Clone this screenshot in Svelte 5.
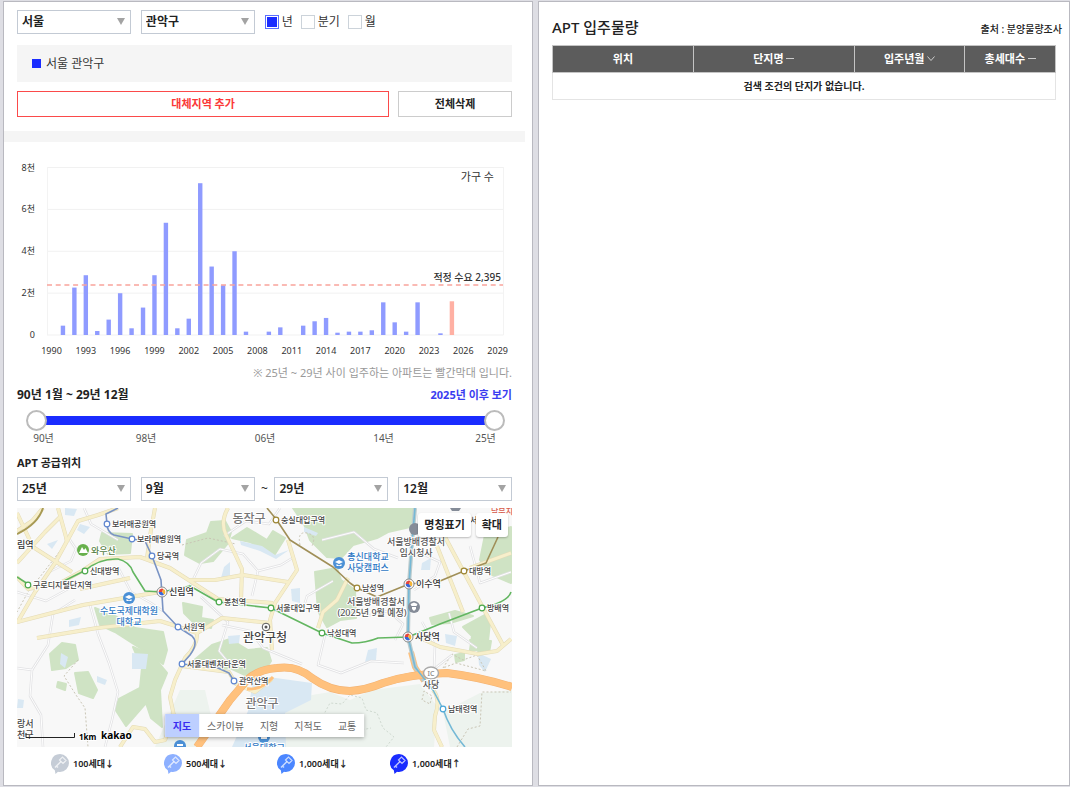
<script>
  let city = "서울";
  let district = "관악구";
  let unit = "년";
  const units = ["년", "분기", "월"];

  let fromYear = "25년";
  let fromMonth = "9월";
  let toYear = "29년";
  let toMonth = "12월";
  const years = ["25년", "26년", "27년", "28년", "29년"];
  const months = Array.from({ length: 12 }, (_, i) => `${i + 1}월`);

  let rangeStart = 0;
  let rangeEnd = 100;

  // households per year, starting in 1990
  const supply = [
    0, 446, 2265, 2855, 190, 735, 1995, 320, 1310, 2855, 5360, 320, 780, 7250,
    3270, 2375, 4000, 160, 0, 160, 365, 0, 446, 655, 815, 110, 160, 160, 225,
    1560, 605, 160, 1560, 0, 80, 1610,
  ];
  const barX = (i) => 51.5 + i * 11.44;
  const barY = (v) => 335 - (v / 8000) * 167.5;
  const yLabels = [
    [8000, "8천"],
    [6000, "6천"],
    [4000, "4천"],
    [2000, "2천"],
    [0, "0"],
  ];
  const xLabels = Array.from({ length: 14 }, (_, i) => i * 3);

  const parks = [
    "M102 533L132 534L130 553L108 554L100 541Z",
    "M187 540L207 533L211 522L225 521L231 532L228 543L213 561L200 563L185 555Z",
    "M232 538L247 528L267 540L273 531L285 538L275 554L250 542Z",
    "M293 508L414 508L410 527L388 532L377 538L353 545L341 558L327 557L310 540L304 524Z",
    "M315 572L337 568L341 580L355 590L356 618L340 620L327 627L318 611Z",
    "M183 603L202 607L201 618L213 620L211 628L196 625L184 613Z",
    "M485 535L511 527L511 583L490 574L480 560Z",
    "M463 627L485 615L490 623L487 650L470 650L472 636Z",
    "M430 618L455 611L473 616L450 623L432 624Z",
    "M50 654L62 643L75 645L78 660L66 668L52 670Z",
    "M95 608L117 617L135 628L163 632L167 650L163 664L143 650L115 632L100 625Z",
    "M133 647L152 655L167 673L160 690L162 727L151 718L146 703L126 726L115 709L119 699L140 688L142 668Z",
    "M75 673L88 672L97 690L93 698L79 693Z",
    "M192 662L212 645L230 639L248 650L267 648L271 661L264 672L245 675L230 668L213 670Z",
    "M58 682L66 684L65 690L57 687Z",
    "M455 655L464 653L464 660L456 662Z",
    "M470 640L491 641L489 653L478 651Z",
  ];
  const waters = [
    "M254 675L312 683L311 700L285 713L286 747L232 747L248 711Z",
    "M65 508L77 509L74 516L65 515Z",
    "M80 524L90 527L84 534L77 530Z",
    "M47 544L58 540L52 549Z",
    "M132 653L148 654L146 669L132 669Z",
    "M61 653L68 657L65 668L60 664Z",
    "M224 567L230 562L230 575L221 578Z",
    "M291 589L300 588L300 603L292 601Z",
    "M228 636L240 635L239 643L229 644Z",
    "M422 563L431 558L430 570L421 570Z",
    "M18 699L24 700L23 708L17 708Z",
    "M368 650L377 648L376 660L365 662Z",
    "M69 620L81 617L79 625L69 627Z",
    "M478 653L491 659L485 672L479 665Z",
    "M304 527L318 533L316 536L304 532Z",
    "M445 634L457 636L455 646L446 643Z",
    "M97 676L107 680L105 685L97 682Z",
    "M240 541L262 546L275 555L289 550L276 559L260 551L241 545Z",
  ];
  const lanes = [
    "M17 668L32 670L48 645L53 614L75 600",
    "M84 508L91 524L118 540",
    "M90 605L98 634L109 663L118 692L112 720L105 747",
    "M32 670L30 696L41 715L43 747",
    "M17 592L46 601L68 589",
    "M118 567L131 592L151 603L163 611",
    "M190 586L201 563L220 549L243 554L258 571L252 596",
    "M258 571L281 565L294 557",
    "M201 597L228 622L219 651L229 663",
    "M222 625L250 631L263 648L302 664",
    "M280 612L304 606L307 596L333 581",
    "M322 540L354 532L374 549L398 558",
    "M414 550L440 562L435 576L414 590",
    "M422 622L435 645L434 669L452 655",
    "M325 635L318 665L341 673L371 661L404 663",
    "M362 617L388 611L403 624L395 640",
    "M470 546L480 583L511 572",
    "M449 613L454 632L477 648",
    "M280 508L269 524L246 521L224 536",
    "M70 540L76 549L71 561L47 573",
  ];
  const roads = [
    "M43 508L32 521L17 531",
    "M58 508L66 537L67 542",
    "M118 508L98 515L78 521L55 563L35 592L17 623",
    "M17 513L33 547L72 572",
    "M17 563L45 532L60 517",
    "M17 622L83 605L130 597L160 592",
    "M37 638L97 628L160 621L176 626",
    "M155 508L151 530L147 558",
    "M17 577L28 589L60 583L82 571L100 559L140 557L170 568L218 599L273 603",
    "M80 589L130 578",
    "M228 508Q220 522 226 535L236 556L242 569L241 601",
    "M190 580L215 580L243 575L288 582",
    "M288 540L297 570L275 603L270 620L272 650",
    "M176 626L197 633L222 618L270 623",
    "M348 578L337 600L323 612L318 628",
    "M437 546L463 612",
    "M445 537L503 645",
    "M470 568L511 553",
    "M197 633Q198 645 185 658L175 680L170 697L174 716L165 740L155 742L145 729L133 727L120 747",
    "M182 666L229 672L236 684L255 692L272 679",
    "M418 637L440 647L478 654L497 651L511 639",
    "M433 690Q441 699 435 716L434 730L442 747",
  ];
  const highway =
    "M197 747L230 700L247 680Q259 669 277 668Q297 665 312 678Q330 691 350 691Q366 690 383 683Q410 674 447 673Q480 677 512 687";
  const rail2 =
    "M17 577L28 584M60 583L84 571Q100 558 118 559Q130 562 133 572L145 591L162 592L190 586L218 602L271 608L322 633L352 643Q366 643 378 638L408 637L440 624L482 608Q508 602 511 592";
  const railSillim =
    "M118 508L106 514L107 524Q107 532 114 535L132 539L145 541L152 556L161 580L163 611L178 627L192 636Q199 643 190 655L182 664L218 668L229 673L234 681";
  const rail7 =
    "M267 508L276 519L290 540L333 567L350 583L357 588L377 597L409 584L440 581L464 571L486 563L498 537";
  const rail4 =
    "M415 508L412 543L409 584L408 637L415 667L433 690L443 709Q450 730 465 747";

  const stations = [
    [107, 524, "보라매공원역", "#5f86d0"],
    [132, 539, "보라매병원역", "#5f86d0"],
    [152, 556, "당곡역", "#5f86d0"],
    [178, 627, "서원역", "#5f86d0"],
    [182, 664, "서울대벤처타운역", "#5f86d0"],
    [234, 681, "관악산역", "#5f86d0"],
    [85, 571, "신대방역", "#4ba84b"],
    [28, 585, "구로디지털단지역", "#4ba84b"],
    [219, 602, "봉천역", "#4ba84b"],
    [271, 608, "서울대입구역", "#4ba84b"],
    [322, 633, "낙성대역", "#4ba84b"],
    [482, 608, "방배역", "#4ba84b"],
    [276, 520, "숭실대입구역", "#9c8532"],
    [357, 588, "남성역", "#9c8532"],
    [464, 571, "대방역", "#9c8532"],
    [443, 709, "남태령역", "#48a6d8"],
  ];
  const transfers = [
    [162, 592, "신림역"],
    [409, 584, "이수역"],
    [408, 637, "사당역"],
  ];

  const mapTypes = ["지도", "스카이뷰", "지형", "지적도", "교통"];
  let mapType = "지도";

  const markers = [
    ["#c5ccd6", "100세대↓"],
    ["#8db0ff", "500세대↓"],
    ["#4b86ff", "1,000세대↓"],
    ["#1a2cff", "1,000세대↑"],
  ];
</script>

<div class="page">
  <section class="panel left">
    <div class="filters">
      <span class="select">
        <select bind:value={city} aria-label="시도">
          <option>서울</option>
          <option>경기</option>
        </select>
      </span>
      <span class="select">
        <select bind:value={district} aria-label="시군구">
          <option>관악구</option>
          <option>동작구</option>
        </select>
      </span>
      <div class="units">
        {#each units as u}
          <label><input type="radio" name="unit" value={u} bind:group={unit} />{u}</label>
        {/each}
      </div>
    </div>

    <div class="region"><i></i>서울 관악구</div>

    <div class="actions">
      <button class="add">대체지역 추가</button>
      <button class="clear">전체삭제</button>
    </div>

    <div class="band"></div>

    <svg class="chart" viewBox="17 142 495 222" role="img" aria-label="가구 수">
      {#each yLabels as [value, label]}
        <line x1="47" x2="503.5" y1={barY(value)} y2={barY(value)} stroke="#f1f1f1" />
        <text x="35" y={barY(value) + 3} text-anchor="end" class="tick">{label}</text>
      {/each}
      <path d="M47.5 167V335M503.5 167V335" stroke="#f3f3f3" />
      {#each supply as value, i}
        <rect
          x={barX(i) - 2.2}
          y={barY(value)}
          width="4.4"
          height={335 - barY(value)}
          fill={i >= 35 ? "#ffb0a3" : "#8f9bff"}
        />
      {/each}
      <path d="M47 285H503" stroke="#f9a49c" stroke-width="1.5" stroke-dasharray="5 3.7" />
      {#each xLabels as i}
        <text x={barX(i)} y="354" text-anchor="middle" class="tick">{1990 + i}</text>
      {/each}
      <text x="494" y="181" text-anchor="end" class="unit-name">가구 수</text>
      <text x="501" y="281" text-anchor="end" class="demand">적정 수요 2,395</text>
    </svg>
    <p class="note">※ 25년 ~ 29년 사이 입주하는 아파트는 빨간막대 입니다.</p>

    <div class="period">
      <strong>90년 1월 ~ 29년 12월</strong>
      <button>2025년 이후 보기</button>
    </div>
    <div class="slider">
      <div class="track"></div>
      <input type="range" bind:value={rangeStart} aria-label="시작 시점" />
      <input type="range" bind:value={rangeEnd} aria-label="종료 시점" />
    </div>
    <div class="slider-ticks">
      <span>90년</span><span>98년</span><span>06년</span><span>14년</span><span>25년</span>
    </div>

    <h2>APT 공급위치</h2>
    <div class="dates">
      <div class="pair">
        <span class="select">
          <select bind:value={fromYear} aria-label="시작 연도">
            {#each years as y}<option>{y}</option>{/each}
          </select>
        </span>
        <span class="select">
          <select bind:value={fromMonth} aria-label="시작 월">
            {#each months as m}<option>{m}</option>{/each}
          </select>
        </span>
      </div>
      <span>~</span>
      <div class="pair">
        <span class="select">
          <select bind:value={toYear} aria-label="종료 연도">
            {#each years as y}<option>{y}</option>{/each}
          </select>
        </span>
        <span class="select">
          <select bind:value={toMonth} aria-label="종료 월">
            {#each months as m}<option>{m}</option>{/each}
          </select>
        </span>
      </div>
    </div>

    <div class="map">
      <svg viewBox="17 508 495 239" preserveAspectRatio="xMidYMid slice">
        <rect x="17" y="508" width="495" height="239" fill="#f8f8f8" />
        <path
          d="M285 713L312 695L330 692L350 700L372 690L420 684L437 706L434 747H285ZM443 712L480 693L512 690V747H450ZM155 747L180 690L205 690L212 720L196 747Z"
          fill="#edf3ee"
        />
        {#each parks as d}<path {d} fill="#cfe3c4" stroke="#cfe3c4" stroke-width="2" />{/each}
        {#each waters as d}<path {d} fill="#d9e8f3" />{/each}
        <path
          d="M323 716L330 703L342 704L350 695L362 698L366 710L377 713L383 728L394 737L386 747M330 725L345 718L356 731L371 728"
          class="trail"
        />
        <path d="M443 668L452 654L463 660L477 655L486 671L456 663ZM422 700L424 691L432 696L430 704ZM457 747L468 729L480 726L482 692L511 692" class="dotted" />
        <path d="M78 660L64 676L76 695L85 708L88 747M58 508L67 542L43 573L28 592L17 612" class="dotted" />
        <path d="M182 545L208 538L236 544M300 545Q297 531 307 533T312 546M338 615L356 612" class="dotted" />
        {#each lanes as d}<path {d} class="lane" /><path {d} class="lane-in" />{/each}
        {#each roads as d}<path {d} class="road-edge" />{/each}
        {#each roads as d}<path {d} class="road" />{/each}
        <path d="M17 534Q38 524 43 508" fill="none" stroke="#a89a54" stroke-width="2" />
        <path d="M411 652L415 667L424 681" fill="none" stroke="#ffc17d" stroke-width="6" />
        <path d="M247 689Q262 690 273 677" fill="none" stroke="#ffc17d" stroke-width="3" />
        <path d="M415 508L412 543L409 584L408 637L415 667L424 681" fill="none" stroke="#bccbcd" stroke-width="4" />
        <path d={highway} fill="none" stroke="#f3b374" stroke-width="8" />
        <path d={highway} fill="none" stroke="#ffc17d" stroke-width="7" />
        <path d={rail2} class="rail" stroke="#63b661" />
        <path d={railSillim} class="rail" stroke="#7993c4" />
        <path d={rail7} class="rail" stroke="#a08f58" />
        <path d={rail4} class="rail" stroke="#75b9d6" />

        {#each stations as [x, y, name, color]}
          <circle cx={x} cy={y} r="2.8" fill="#fff" stroke={color} stroke-width="1.2" />
          <text x={x + 5} y={y + 3} class="station">{name}</text>
        {/each}
        {#each transfers as [x, y, name]}
          <circle cx={x} cy={y} r="5" fill="#fff" stroke="#888" />
          <path d="M{x - 3.4} {y}A3.4 3.4 0 0 1 {x + 1.5} {y - 3}L{x} {y}Z" fill="#e5443c" />
          <path d="M{x + 1.5} {y - 3}A3.4 3.4 0 0 1 {x + 2} {y + 2.8}L{x} {y}Z" fill="#f4b434" />
          <path d="M{x + 2} {y + 2.8}A3.4 3.4 0 0 1 {x - 3.4} {y}L{x} {y}Z" fill="#3b67d6" />
          <text x={x + 7} y={y + 3} class="transfer">{name}</text>
        {/each}

        <text x="17" y="548" class="transfer">림역</text>
        <text x="249" y="523" class="area">동작구</text>
        <text x="262" y="708" class="area">관악구</text>
        <text x="265" y="642" class="office">관악구청</text>
        <circle cx="266" cy="627" r="3.8" fill="#fff" stroke="#555" />
        <circle cx="266" cy="627" r="1.5" fill="#555" />

        <circle cx="83" cy="550" r="6" fill="#67b04c" />
        <path d="M79 553L82 547L84 550L85.5 548L88 553Z" fill="#fff" />
        <text x="91" y="554" class="hill">와우산</text>

        <g fill="#4b90d6">
          <circle cx="129" cy="598" r="6" />
          <circle cx="339" cy="563" r="6" />
          <circle cx="180" cy="746" r="6" />
          <circle cx="264" cy="737" r="6" />
        </g>
        <path
          d="M125 597L129 595L133 597L129 599ZM126.5 599L129 600.5L131.5 599V601H126.5ZM335 562L339 560L343 562L339 564ZM336.5 564L339 565.5L341.5 564V566H336.5ZM177 744H183V746H177ZM261 737H267V739H261Z"
          fill="#fff"
        />
        <g class="school">
          <text x="129" y="614">수도국제대학원</text>
          <text x="129" y="625">대학교</text>
          <text x="368" y="560">총신대학교</text>
          <text x="368" y="571">사당캠퍼스</text>
          <text x="264" y="751">서울대학교</text>
        </g>

        <g fill="#858c98">
          <circle cx="415" cy="529" r="6" />
          <circle cx="414" cy="607" r="6" />
          <path d="M450 508H461L459 511H452Z" />
        </g>
        <path d="M410.5 604L414 602.5L417.5 604L416.5 606H411.5ZM412 607H416V609L414 611L412 609Z" fill="#fff" />
        <g class="police">
          <text x="416" y="545">서울방배경찰서</text>
          <text x="416" y="556">임시청사</text>
          <text x="376" y="605">서울방배경찰서</text>
          <text x="372" y="616">(2025년 9월 예정)</text>
        </g>
        <text x="470" y="523" class="station">서</text>
        <text x="491" y="514" class="station red">남부지</text>

        <ellipse cx="431" cy="673" rx="7.5" ry="6" fill="#fff" stroke="#aaa" stroke-width="1.5" />
        <text x="431" y="676" class="ic">IC</text>
        <text x="431" y="688" class="police">사당</text>

        <text x="17" y="727" class="edge">랑서</text>
        <text x="17" y="738" class="edge">천구</text>
        <path d="M26 733V737.5H74.5V733" fill="none" stroke="#222" />
        <text x="79" y="740" class="scale">1km</text>
        <text x="101" y="739" class="logo">kakao</text>
      </svg>
      <div class="map-buttons">
        <button>명칭표기</button>
        <button>확대</button>
      </div>
      <div class="map-types">
        {#each mapTypes as t}
          <button class:active={mapType === t} on:click={() => (mapType = t)}>{t}</button>
        {/each}
      </div>
    </div>

    <ul class="markers">
      {#each markers as [color, label]}
        <li>
          <svg width="18" height="20" viewBox="0 0 18 20">
            <path d="M9 0a9 9 0 0 1 0 18q-1 0-2-.3L4.5 20L3.8 16.3A9 9 0 0 1 9 0Z" fill={color} />
            <path d="M4 13.5L10 7.5M5.5 12L7 13.5" fill="none" stroke="#fff" stroke-opacity=".7" stroke-width="1.5" />
            <path d="M8.5 6L11.5 3L15 6.5L12 9.5Z" fill="none" stroke="#fff" stroke-opacity=".7" stroke-width="1.2" />
          </svg>
          {label}
        </li>
      {/each}
    </ul>
  </section>

  <section class="panel right">
    <header>
      <h1>APT 입주물량</h1>
      <span>출처 : 분양물량조사</span>
    </header>
    <table>
      <thead>
        <tr>
          <th class="c1">위치</th>
          <th class="c2">
            단지명 <svg width="8" height="8" viewBox="0 0 8 8"><path d="M0 3.5H8" /></svg>
          </th>
          <th class="c3">
            입주년월 <svg width="8" height="8" viewBox="0 0 8 8"><path d="M.5 1.5L4 5.5L7.5 1.5" /></svg>
          </th>
          <th class="c4">
            총세대수 <svg width="8" height="8" viewBox="0 0 8 8"><path d="M0 3.5H8" /></svg>
          </th>
        </tr>
      </thead>
      <tbody>
        <tr><td colspan="4">검색 조건의 단지가 없습니다.</td></tr>
      </tbody>
    </table>
  </section>
</div>

<style>
  :global(body) {
    background: #dedee4;
  }
  .page {
    box-sizing: border-box;
    display: grid;
    grid-template-columns: 530fr 532fr;
    gap: 5px;
    min-height: 100vh;
    padding: 1px 0 1px 3px;
    font-family: "Noto Sans", "Noto Sans CJK KR", sans-serif;
    font-size: 12px;
    line-height: 18px;
    color: #222;
  }
  .panel {
    min-width: 0;
    background: #fff;
    border: 1px solid #b9b9c0;
  }
  .left {
    padding: 8px 20px 0 13px;
  }
  button,
  select {
    font: inherit;
    color: inherit;
    margin: 0;
  }
  button {
    cursor: pointer;
    padding: 0;
    border: none;
    background: none;
  }
  svg {
    display: block;
  }

  .filters {
    display: flex;
    align-items: center;
    gap: 10px;
  }
  .select {
    position: relative;
    flex: 0 0 23%;
  }
  .select::after {
    content: "";
    position: absolute;
    right: 6px;
    top: 8px;
    border: 4px solid transparent;
    border-top: 7px solid #a3a3a3;
    border-bottom: none;
    pointer-events: none;
  }
  select {
    display: block;
    appearance: none;
    box-sizing: border-box;
    width: 100%;
    height: 24px;
    padding: 0 16px 0 4px;
    border: 1px solid #c3cad4;
    border-radius: 0;
    background: #fff;
    font-weight: 600;
  }
  .units {
    display: flex;
    gap: 8px;
  }
  .units label {
    display: flex;
    align-items: center;
    gap: 3px;
    color: #333;
  }
  .units input {
    appearance: none;
    box-sizing: border-box;
    width: 14px;
    height: 14px;
    margin: 0;
    border: 1px solid #ccd3da;
  }
  .units input:checked {
    border-color: #5c70ff;
    background: #1a2cff;
    box-shadow: inset 0 0 0 1px #fff;
  }

  .region {
    display: flex;
    align-items: center;
    gap: 5px;
    height: 37px;
    margin-top: 11px;
    padding-left: 15px;
    background: #f5f5f5;
    color: #333;
  }
  .region i {
    width: 9px;
    height: 9px;
    background: #1a2cff;
  }
  .actions {
    display: flex;
    gap: 9px;
    margin-top: 9px;
  }
  .actions button {
    height: 26px;
    border: 1px solid #ccc;
    font-size: 11px;
    font-weight: 700;
  }
  .actions .add {
    flex: 1;
    border-color: #fb4a4a;
    color: #fb3838;
  }
  .actions .clear {
    flex: 0 0 23%;
  }
  .band {
    height: 11px;
    margin: 14px -13px 0;
    background: #f5f5f5;
  }

  .chart {
    width: 100%;
    fill: #333;
  }
  .tick {
    font-size: 9px;
  }
  .unit-name {
    font-size: 11px;
  }
  .demand {
    font-size: 10px;
    font-weight: 500;
  }
  .note {
    margin: 0;
    text-align: right;
    font-size: 11px;
    color: #999;
  }

  .period {
    display: flex;
    justify-content: space-between;
    margin-top: 4px;
  }
  .period button {
    font-size: 11px;
    font-weight: 700;
    color: #3a3df0;
  }
  .slider {
    position: relative;
    height: 21px;
    margin: 6px 7px 0 9px;
  }
  .track {
    position: absolute;
    inset: 6px 10px;
    background: #1a2cff;
  }
  .slider input {
    position: absolute;
    inset: 0;
    appearance: none;
    width: 100%;
    height: 21px;
    margin: 0;
    background: none;
    pointer-events: none;
  }
  .slider input::-webkit-slider-thumb {
    appearance: none;
    box-sizing: border-box;
    width: 21px;
    height: 21px;
    border: 2px solid #bbb;
    border-radius: 50%;
    background: #fff;
    pointer-events: auto;
  }
  .slider-ticks {
    display: grid;
    grid-template-columns: 35fr 170fr 68fr 169fr 35fr;
    margin: 0 9px;
    text-align: center;
    font-size: 10px;
    line-height: 15px;
    color: #555;
  }
  h2 {
    margin: 8px 0 5px;
    font-size: 11px;
    line-height: 18px;
  }
  .dates {
    display: flex;
    align-items: center;
    justify-content: space-between;
  }
  .pair {
    display: flex;
    gap: 10px;
    width: 48%;
  }
  .pair .select {
    flex: 1;
  }

  .map {
    position: relative;
    margin-top: 7px;
    overflow: hidden;
  }
  .map > svg {
    width: 100%;
  }
  .map path {
    stroke-linejoin: round;
  }
  .trail,
  .dotted {
    fill: none;
    stroke: #cfd9d0;
    stroke-dasharray: 2 2;
  }
  .dotted {
    stroke: #c9c5b5;
  }
  .lane {
    fill: none;
    stroke: #e2e2e4;
    stroke-width: 2.5;
  }
  .lane-in {
    fill: none;
    stroke: #fff;
    stroke-width: 1;
  }
  .road-edge {
    fill: none;
    stroke: #e3dab6;
    stroke-width: 4;
  }
  .road {
    fill: none;
    stroke: #f7efcb;
    stroke-width: 3;
  }
  .rail {
    fill: none;
    stroke-width: 1.6;
  }
  .map text {
    paint-order: stroke;
    stroke: #fff;
    stroke-width: 2px;
    stroke-linejoin: round;
    font-weight: 500;
  }
  .station {
    font-size: 8px;
    fill: #444;
  }
  .red {
    fill: #d75b4c;
  }
  .transfer {
    font-size: 9px;
    fill: #333;
  }
  .area {
    font-size: 12px;
    text-anchor: middle;
    fill: #777;
  }
  .office {
    font-size: 12px;
    text-anchor: middle;
    fill: #444;
  }
  .hill {
    font-size: 9px;
    fill: #558045;
  }
  .school {
    font-size: 9px;
    text-anchor: middle;
    fill: #2f78c4;
  }
  .police {
    font-size: 9px;
    text-anchor: middle;
    fill: #555;
  }
  .edge {
    font-size: 9px;
    fill: #444;
  }
  .ic {
    font-size: 7px;
    text-anchor: middle;
    fill: #888;
  }
  .map .scale {
    font-size: 8px;
    font-weight: 700;
  }
  .map .logo {
    font-size: 10px;
    font-weight: 700;
  }
  .map-buttons {
    position: absolute;
    top: 5px;
    right: 4px;
    display: flex;
    gap: 5px;
  }
  .map-buttons button {
    height: 24px;
    padding: 0 6px;
    border-radius: 3px;
    background: #fff;
    box-shadow: 0 1px 2px rgba(0, 0, 0, 0.25);
    font-size: 11px;
    font-weight: 700;
  }
  .map-types {
    position: absolute;
    left: 50%;
    bottom: 10px;
    display: flex;
    transform: translateX(-50%);
    background: #fff;
    box-shadow: 0 1px 4px rgba(0, 0, 0, 0.35);
    white-space: nowrap;
  }
  .map-types button {
    height: 23px;
    padding: 0 8px;
    font-size: 10px;
    color: #666;
  }
  .map-types .active {
    background: #bdcfff;
    color: #3a2df0;
    font-weight: 700;
  }

  .markers {
    display: grid;
    grid-template-columns: repeat(4, 1fr);
    margin: 0;
    padding: 7px 9px 11px 34px;
    list-style: none;
    font-size: 9px;
    font-weight: 600;
    white-space: nowrap;
  }
  .markers li {
    display: flex;
    align-items: center;
    gap: 4px;
  }

  .right {
    padding: 15px 7px 0 13px;
  }
  header {
    display: flex;
    justify-content: space-between;
    align-items: flex-end;
    margin-bottom: 8px;
  }
  h1 {
    margin: 0;
    font-size: 15px;
    line-height: 20px;
    font-weight: 500;
  }
  header span {
    font-size: 10px;
    line-height: 16px;
    font-weight: 500;
  }
  table {
    width: calc(100% - 6px);
    table-layout: fixed;
    border-collapse: collapse;
    font-size: 11px;
  }
  th,
  td {
    box-sizing: border-box;
    height: 27px;
    padding: 0;
    text-align: center;
  }
  th {
    border: 1px solid #c4c4c4;
    background: #5c5c5c;
    color: #fff;
    font-weight: 600;
  }
  td {
    border: 1px solid #e4e4e4;
    font-size: 10px;
    font-weight: 600;
  }
  th svg {
    display: inline-block;
    fill: none;
    stroke: #ccc;
  }
  .c1 {
    width: 28%;
  }
  .c2 {
    width: 32%;
  }
  .c3 {
    width: 22%;
  }
  .c4 {
    width: 18%;
  }
</style>
